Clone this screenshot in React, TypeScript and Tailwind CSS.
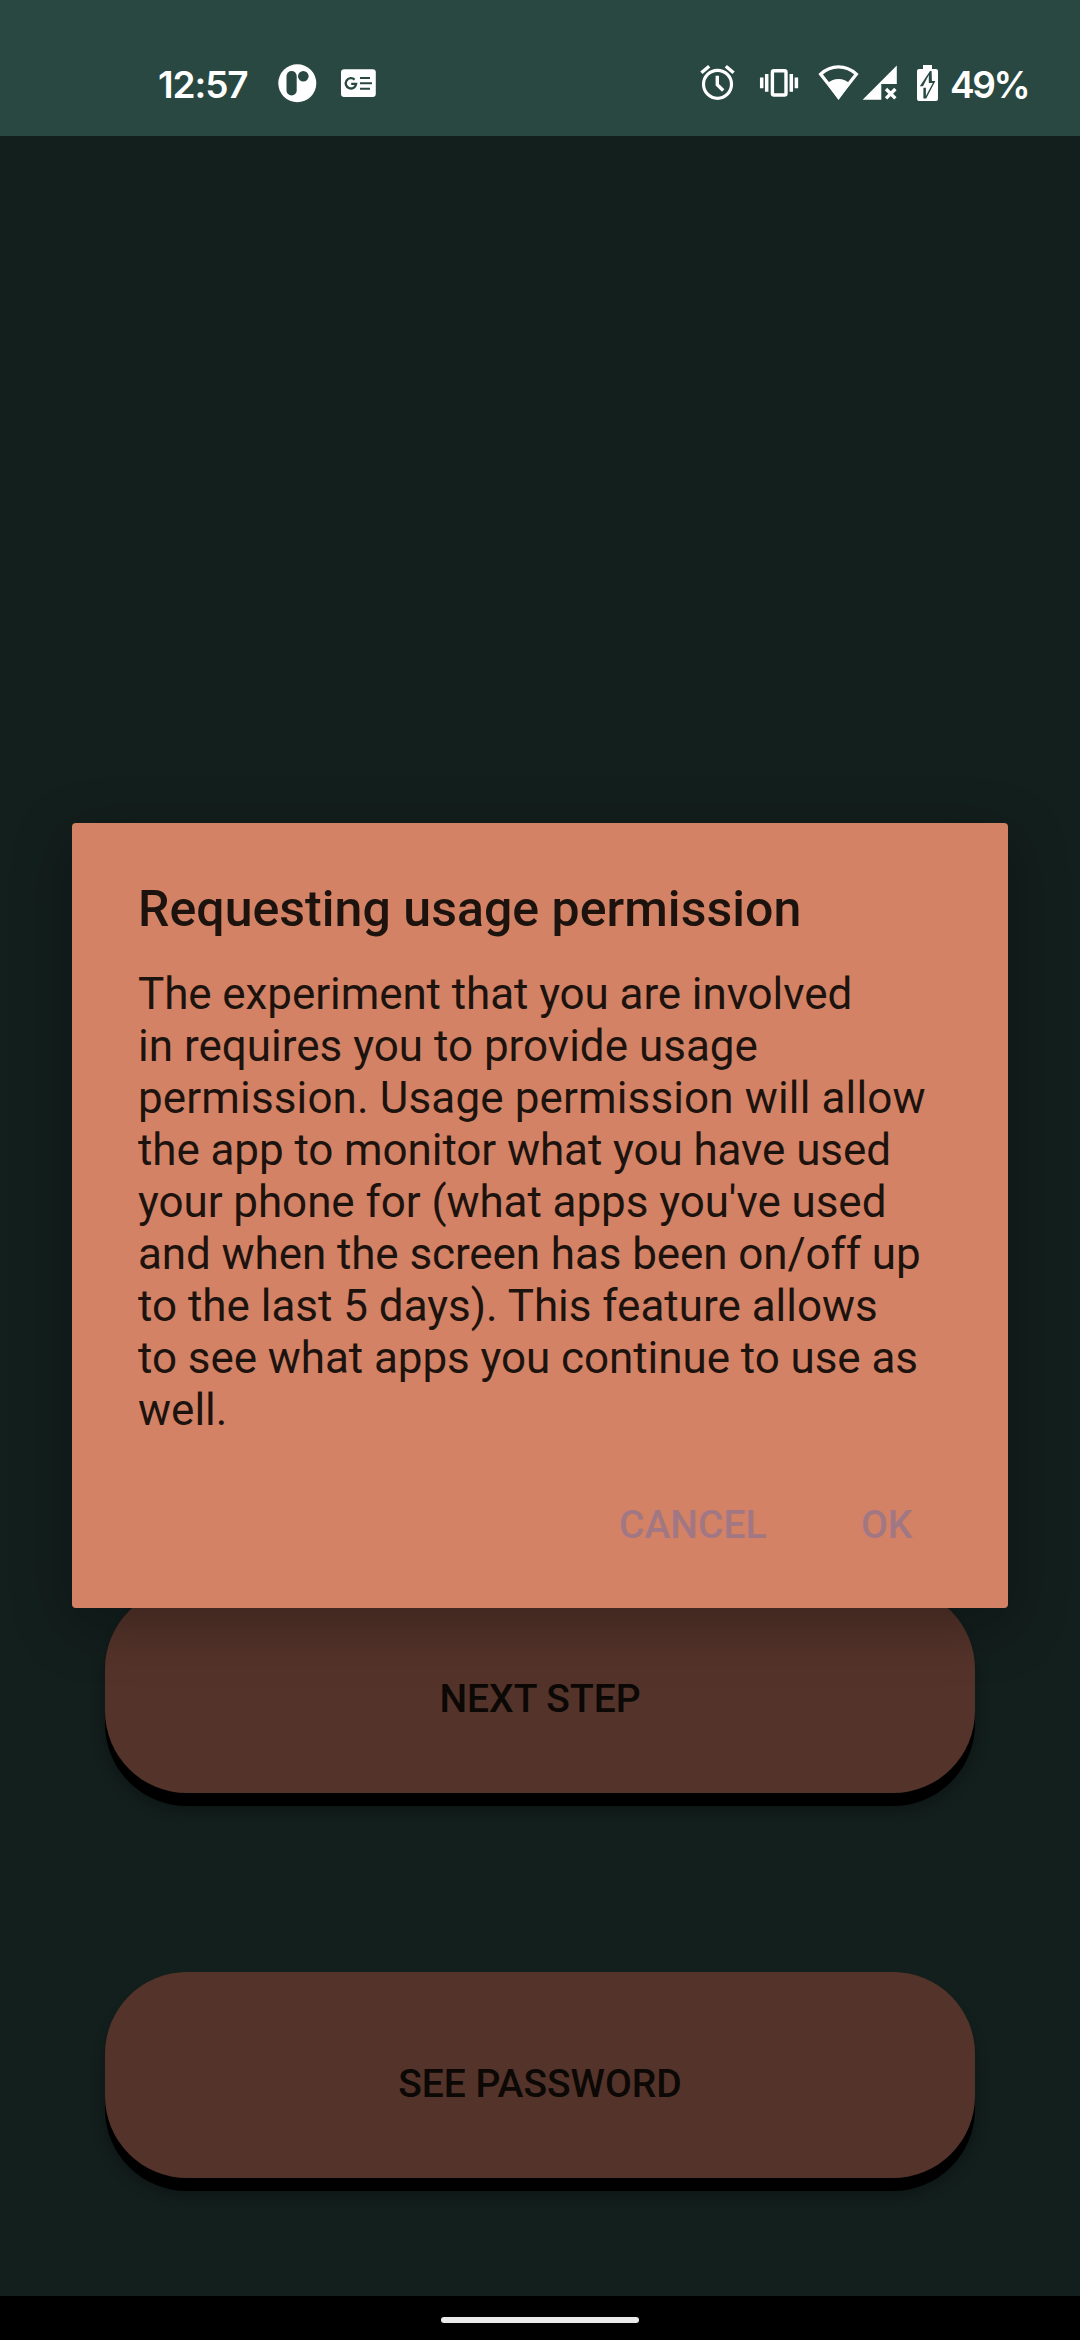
import React from "react";

const BODY_LINES = [
  { text: "The experiment that you are involved", tracking: "tracking-[-0.09px]" },
  { text: "in requires you to provide usage", tracking: "tracking-normal" },
  { text: "permission. Usage permission will allow", tracking: "tracking-[0.13px]" },
  { text: "the app to monitor what you have used", tracking: "tracking-[-0.09px]" },
  { text: "your phone for (what apps you've used", tracking: "tracking-[-0.07px]" },
  { text: "and when the screen has been on/off up", tracking: "tracking-[-0.1px]" },
  { text: "to the last 5 days). This feature allows", tracking: "tracking-[-0.02px]" },
  { text: "to see what apps you continue to use as", tracking: "tracking-[-0.07px]" },
  { text: "well.", tracking: "tracking-normal" },
];

function PinIcon() {
  return (
    <svg width="40" height="40" viewBox="277 63 40 40" className="shrink-0">
      <circle cx="297.3" cy="83.2" r="19" fill="#fff" />
      <rect x="286.5" y="71" width="10.2" height="24.6" rx="5.1" fill="#284841" />
      <circle cx="303.3" cy="76.3" r="5.3" fill="#284841" />
    </svg>
  );
}

function NewsIcon() {
  return (
    <svg width="36" height="30" viewBox="340 68 36 30" className="shrink-0">
      <rect x="341" y="69.3" width="34.8" height="27.7" rx="3.2" fill="#fff" />
      <path d="M354.6 79.6A5.2 5.2 0 1 0 356.1 83.9H351.2" fill="none" stroke="#284841" strokeWidth="2.3" />
      <path d="M360 78H370M360 83.3H372M360 88.7H370" stroke="#284841" strokeWidth="2.1" />
    </svg>
  );
}

function AlarmIcon() {
  return (
    <svg width="36" height="38" viewBox="700 63 36 38" className="shrink-0">
      <g fill="none" stroke="#fff" strokeWidth="3.2">
        <circle cx="717.5" cy="84.3" r="14" />
        <path d="M701.4 72.8L709.2 66.2M725.8 66.2L733.6 72.8" strokeWidth="3.4" />
        <path d="M717.3 75.7V84.8L723.2 90.4" strokeWidth="3.4" />
      </g>
    </svg>
  );
}

function VibrateIcon() {
  return (
    <svg width="40" height="30" viewBox="759 68 40 30" className="shrink-0">
      <rect x="772.4" y="70.8" width="13.6" height="24.2" rx="1.6" fill="none" stroke="#fff" strokeWidth="3.4" />
      <path d="M761.7 77.5V88.3M766.7 74V91.7M791.3 74V91.7M796.4 77.5V88.3" stroke="#fff" strokeWidth="3.5" />
    </svg>
  );
}

function WifiIcon() {
  return (
    <svg width="42" height="36" viewBox="818 65 42 36" className="shrink-0">
      <path d="M838.5 66.8C831.5 66.8 825.5 69.6 820.6 74.1L838.5 97L856.4 74.1C851.5 69.6 845.5 66.8 838.5 66.8Z" fill="none" stroke="#fff" strokeWidth="3.2" />
      <path d="M838.5 100L827 84C830 80.5 834 79 838.5 79S847 80.5 850 84Z" fill="#fff" />
    </svg>
  );
}

function SignalIcon() {
  return (
    <svg width="36" height="36" viewBox="862 65 36 36" className="shrink-0">
      <path d="M862.6 99.8L896.8 65.6V84H881.3V99.8Z" fill="#fff" />
      <path d="M886 89L895.4 98.4M895.4 89L886 98.4" stroke="#fff" strokeWidth="3.4" />
    </svg>
  );
}

function BatteryIcon() {
  return (
    <svg width="22" height="38" viewBox="917 64 22 38" className="shrink-0">
      <path d="M923 65H932V69H936A2 2 0 0 1 938 71V99A2 2 0 0 1 936 101H919A2 2 0 0 1 917 99V71A2 2 0 0 1 919 69H923Z" fill="#fff" />
      <path d="M930 71L919.8 86.3H923.4V98.5H926.2L935.4 81H931.9L931.6 71Z" fill="#284841" />
      <path d="M928.8 75V83H932.8L925.9 96V87.7H922.2Z" fill="#fff" />
    </svg>
  );
}

function StatusBar() {
  return (
    <header className="flex h-[136px] shrink-0 items-start bg-[#284841] pt-[63px] font-[Inter,sans-serif] text-[37px] leading-[43px] font-semibold text-white">
      <div className="ml-[158px] w-[119px] tracking-[-1.1px]">12:57</div>
      <PinIcon />
      <div className="mt-[5px] ml-[23px]"><NewsIcon /></div>
      <div className="ml-[324px]"><AlarmIcon /></div>
      <div className="mt-[5px] ml-[23px]"><VibrateIcon /></div>
      <div className="mt-[2px] ml-[19px]"><WifiIcon /></div>
      <div className="mt-[2px] ml-[2px]"><SignalIcon /></div>
      <div className="mt-px ml-[19px]"><BatteryIcon /></div>
      <div className="ml-[11px] tracking-[-2.4px]">49%</div>
    </header>
  );
}

function PillButton({ children }: { children: React.ReactNode }) {
  return (
    <button className="flex h-[206px] w-[870px] shrink-0 items-center justify-center rounded-[82px] bg-[#54332a] pt-[17px] text-[39px] leading-[46px] font-medium text-[#0b0805] shadow-[0_13px_0_0_#000,0_16px_14px_0_rgba(0,0,0,0.35)]">
      {children}
    </button>
  );
}

function PermissionDialog() {
  return (
    <section
      role="dialog"
      className="absolute top-[823px] left-[72px] flex h-[785px] w-[936px] flex-col rounded-[4px] bg-[#d38265] pt-[56px] pl-[66px] text-[#1d130e] shadow-[0_16px_60px_0_rgba(0,0,0,0.3)]"
    >
      <h1 className="text-[50px] leading-[60px] font-medium whitespace-nowrap tracking-[0.04px]">Requesting usage permission</h1>
      <p className="mt-[29px] text-[44px] leading-[52px]">
        {BODY_LINES.map(({ text, tracking }) => (
          <span key={text} className={`block whitespace-nowrap ${tracking}`}>{text}</span>
        ))}
      </p>
      <div className="mt-[66px] flex text-[39px] leading-[46px] font-medium text-[#a27784]">
        <button className="ml-[481px] w-[242px] text-left">CANCEL</button>
        <button>OK</button>
      </div>
    </section>
  );
}

export default function App() {
  return (
    <div className="relative flex h-[2340px] w-[1080px] flex-col overflow-hidden bg-[#131f1d] font-[Roboto,sans-serif]">
      <StatusBar />
      <main className="flex flex-1 flex-col items-center justify-end gap-[179px] pb-[118px]">
        <PillButton>NEXT STEP</PillButton>
        <PillButton>SEE PASSWORD</PillButton>
      </main>
      <nav className="flex h-[44px] shrink-0 justify-center bg-black pt-[21px]">
        <div className="h-[6px] w-[198px] rounded-full bg-[#ebebeb]" />
      </nav>
      <PermissionDialog />
    </div>
  );
}
